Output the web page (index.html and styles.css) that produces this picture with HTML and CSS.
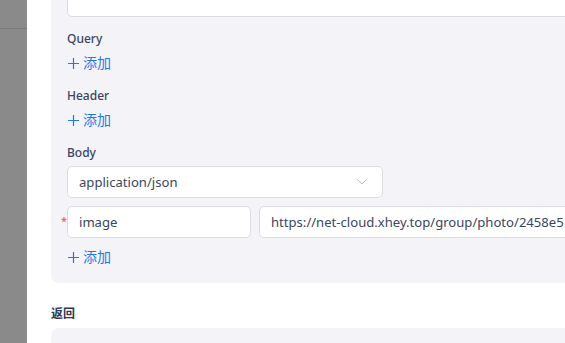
FILE: index.html
```html
<!DOCTYPE html>
<html lang="zh">
<head>
<meta charset="utf-8">
<link rel="stylesheet" href="styles.css">
</head>
<body>
<div class="app">
  <aside class="sidebar"><div class="sidebar-top"></div></aside>
  <main class="main">
    <section class="panel">
      <div class="field">
        <div class="input input-wide"></div>
      </div>
      <div class="field">
        <div class="label">Query</div>
        <div class="add"><svg class="plus" width="11" height="11" viewBox="0 0 11 11"><path d="M5.5 0 V11 M0 5.5 H11" stroke="#1f7ae6" stroke-width="1.2" fill="none"/></svg>添加</div>
      </div>
      <div class="field">
        <div class="label">Header</div>
        <div class="add"><svg class="plus" width="11" height="11" viewBox="0 0 11 11"><path d="M5.5 0 V11 M0 5.5 H11" stroke="#1f7ae6" stroke-width="1.2" fill="none"/></svg>添加</div>
      </div>
      <div class="field field-last">
        <div class="label">Body</div>
        <div class="select">
          <span>application/json</span>
          <svg class="chev" width="10" height="6" viewBox="0 0 10 6"><path d="M0.5 0.5 L5 5 L9.5 0.5" fill="none" stroke="#b9bcc4" stroke-width="1"/></svg>
        </div>
        <div class="kv-row">
          <span class="req">*</span>
          <div class="input input-key">image</div>
          <div class="input input-val">https://net-cloud.xhey.top/group/photo/2458e5</div>
        </div>
        <div class="add"><svg class="plus" width="11" height="11" viewBox="0 0 11 11"><path d="M5.5 0 V11 M0 5.5 H11" stroke="#1f7ae6" stroke-width="1.2" fill="none"/></svg>添加</div>
      </div>
    </section>
    <div class="section-title">返回</div>
    <section class="panel panel-2"></section>
  </main>
</div>
</body>
</html>
```
FILE: styles.css
```css
html, body {
  margin: 0;
  padding: 0;
  background: #fff;
  font-family: "Noto Sans", "Noto Sans CJK SC", sans-serif;
}
.app {
  display: flex;
  width: 565px;
  height: 343px;
  overflow: hidden;
}
.sidebar {
  width: 27px;
  flex: none;
  background: #8a8a8a;
}
.sidebar-top {
  height: 28px;
  border-bottom: 1px solid #7b7b7b;
}
.main {
  flex: 1;
  min-width: 0;
  padding-left: 24px;
  overflow: hidden;
}
.panel {
  width: 620px;
  background: #f4f3f8;
  border-radius: 0 0 8px 8px;
  padding: 16px 16px 15px 16px;
  box-sizing: border-box;
  margin-top: -31px;
}
.panel-2 {
  margin-top: 0;
  height: 60px;
  border-radius: 8px 8px 0 0;
}
.field {
  margin-bottom: 12px;
}
.field-last {
  margin-bottom: 0;
}
.label {
  font-size: 12px;
  line-height: 20px;
  font-weight: 500;
  color: #3b4560;
  margin-bottom: 3px;
}
.add {
  font-size: 14px;
  line-height: 22px;
  color: #1f7ae6;
  display: flex;
  align-items: center;
}
.plus {
  margin-left: 1px;
  margin-right: 4px;
}
.input, .select {
  height: 32px;
  box-sizing: border-box;
  background: #fff;
  border: 1px solid #dcdce0;
  border-radius: 5px;
  padding: 0 11px;
  font-size: 13.1px;
  line-height: 30px;
  color: #3b4560;
  white-space: nowrap;
  overflow: hidden;
}
.input-wide {
  width: 560px;
}
.select {
  width: 316px;
  display: flex;
  align-items: center;
  justify-content: space-between;
  margin-bottom: 8px;
}
.chev {
  margin-right: 4px;
}
.kv-row {
  position: relative;
  display: flex;
  gap: 8px;
  margin-bottom: 8px;
}
.req {
  position: absolute;
  left: -6px;
  top: 9px;
  color: #f04b4b;
  font-size: 11px;
  line-height: 11px;
}
.input-key {
  width: 184px;
  flex: none;
}
.input-val {
  width: 340px;
  flex: none;
}
.section-title {
  font-size: 12px;
  font-weight: 700;
  line-height: 20px;
  color: #2f3850;
  margin-top: 21px;
  margin-bottom: 4px;
}
```
